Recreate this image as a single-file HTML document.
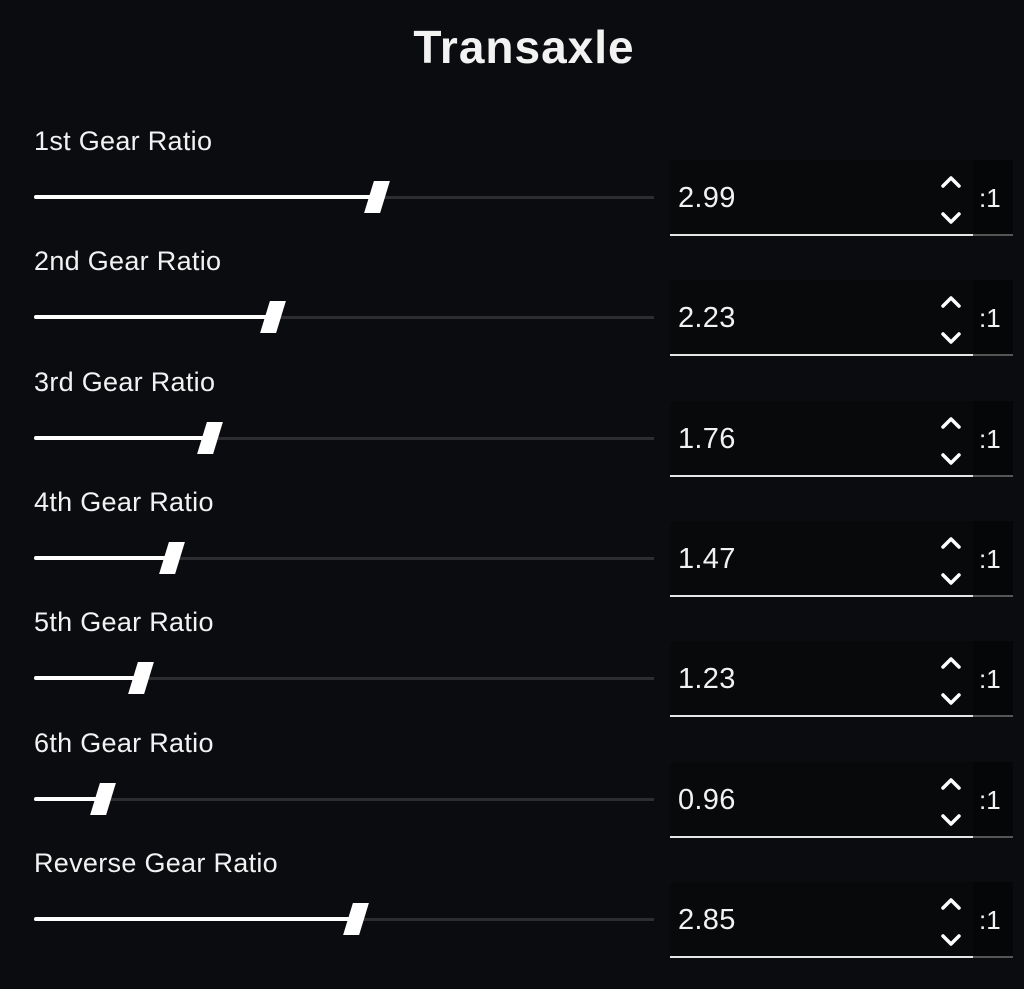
<!DOCTYPE html><html><head><style>
body{margin:0;width:1024px;height:989px;background:#0b0c10;font-family:"Liberation Sans",sans-serif;color:#f2f2f2;position:relative;overflow:hidden}
h1{position:absolute;top:21px;left:24px;width:1000px;text-align:center;margin:0;font-size:46px;font-weight:bold;letter-spacing:1px;line-height:52px}
.row{position:absolute;left:0;width:1024px;height:120px}
.lab{position:absolute;left:34px;top:0px;font-size:27px;letter-spacing:0.3px}
.tr{position:absolute;left:34px;top:70px;width:620px;height:3px;background:#2c2d30}
.fill{position:absolute;left:34px;top:69px;height:4px;background:#fff;border-radius:2px}
.th{position:absolute;top:55px;width:16px;height:32px;background:#fff;transform:skewX(-17deg)}
.box{position:absolute;left:670px;top:34px;width:343px;height:76px;background:#08090b;border-radius:4px 4px 0 0}
.unit{position:absolute;left:303px;top:0;width:40px;height:76px;background:#050608}
.ul{position:absolute;left:0;bottom:0;width:303px;height:2px;background:#e6e6e6}
.ul2{position:absolute;left:303px;bottom:0;width:40px;height:2px;background:#555}
.val{position:absolute;left:8px;top:22px;font-size:29px;letter-spacing:0.3px}
.u{position:absolute;left:6px;top:23px;font-size:26px}
.sp{position:absolute;left:268px;top:12px}
</style></head><body>
<h1>Transaxle</h1>
<div id="rows"></div>
<script>
var d=[["1st Gear Ratio","2.99",377],["2nd Gear Ratio","2.23",273],["3rd Gear Ratio","1.76",210],["4th Gear Ratio","1.47",172],["5th Gear Ratio","1.23",141],["6th Gear Ratio","0.96",103],["Reverse Gear Ratio","2.85",356]];
var h="";d.forEach(function(r,i){var t=126+i*120.3;
h+='<div class="row" style="top:'+t+'px"><div class="lab">'+r[0]+'</div><div class="tr"></div><div class="fill" style="width:'+(r[2]-34)+'px"></div><div class="th" style="left:'+(r[2]-8)+'px"></div><div class="box"><div class="val">'+r[1]+'</div><svg class="sp" width="26" height="56" viewBox="0 0 26 56"><path d="M5 14 L13 6 L21 14 M5 42 L13 50 L21 42" stroke="#fff" stroke-width="3.5" fill="none" stroke-linecap="round" stroke-linejoin="round"/></svg><div class="unit"><div class="u">:1</div></div><div class="ul"></div><div class="ul2"></div></div></div>';});
document.getElementById("rows").innerHTML=h;
</script>
</body></html>
